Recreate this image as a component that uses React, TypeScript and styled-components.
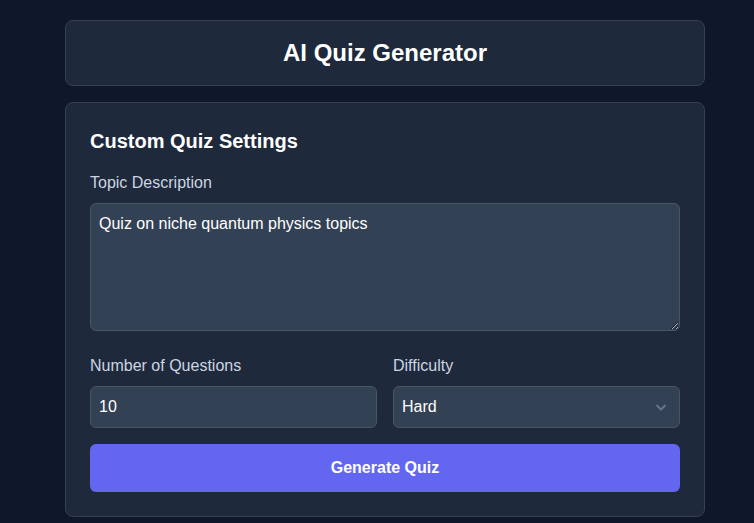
import React from 'react'
import styled, { createGlobalStyle } from 'styled-components'

const GlobalStyle = createGlobalStyle`
  * { box-sizing: border-box; }
  html, body {
    margin: 0;
    padding: 0;
    background: #0f172a;
    font-family: "Liberation Sans", Arial, sans-serif;
    color: #f8fafc;
  }
`

const Page = styled.div`
  padding: 20px 0 0 65px;
  min-height: 523px;
`

const Column = styled.div`
  width: 640px;
  display: flex;
  flex-direction: column;
  gap: 16px;
`

const Card = styled.section<{ padding: string }>`
  background: #1e293b;
  border: 1px solid #334155;
  border-radius: 8px;
  padding: ${({ padding }) => padding};
`

const Title = styled.h1`
  margin: 0;
  text-align: center;
  font-size: 24px;
  line-height: 32px;
  font-weight: 700;
  color: #ffffff;
`

const SectionTitle = styled.h2`
  margin: 0 0 16px;
  font-size: 20px;
  line-height: 28px;
  font-weight: 700;
  color: #ffffff;
`

const Field = styled.div<{ mb?: string }>`
  display: flex;
  flex-direction: column;
  margin-bottom: ${({ mb }) => mb || '0'};
`

const Label = styled.label`
  font-size: 16px;
  line-height: 24px;
  color: #cbd5e1;
  margin-bottom: 8px;
`

const TextArea = styled.textarea`
  display: block;
  width: 100%;
  height: 128px;
  resize: vertical;
  background: #334155;
  border: 1px solid #475569;
  border-radius: 6px;
  padding: 8px;
  color: #ffffff;
  font: 16px/24px "Liberation Sans", Arial, sans-serif;
  outline: none;
`

const Row = styled.div`
  display: grid;
  grid-template-columns: 1fr 1fr;
  gap: 16px;
  margin-bottom: 16px;
`

const Input = styled.input`
  width: 100%;
  height: 42px;
  background: #334155;
  border: 1px solid #475569;
  border-radius: 6px;
  padding: 8px;
  color: #ffffff;
  font: 16px/24px "Liberation Sans", Arial, sans-serif;
  outline: none;
`

const SelectWrap = styled.div`
  position: relative;
`

const Select = styled.select`
  width: 100%;
  height: 42px;
  appearance: none;
  background: #334155;
  border: 1px solid #475569;
  border-radius: 6px;
  padding: 8px;
  color: #ffffff;
  font: 16px/24px "Liberation Sans", Arial, sans-serif;
  outline: none;
`

const Chevron = styled.svg`
  position: absolute;
  right: 13px;
  top: 17px;
  pointer-events: none;
`

const Button = styled.button`
  width: 100%;
  height: 48px;
  border: none;
  border-radius: 6px;
  background: #6366f1;
  color: #ffffff;
  font: 700 16px/24px "Liberation Sans", Arial, sans-serif;
  cursor: pointer;
`

export default function App() {
  return (
    <>
      <GlobalStyle />
      <Page>
        <Column>
          <Card padding="16px">
            <Title>AI Quiz Generator</Title>
          </Card>
          <Card padding="24px">
            <SectionTitle>Custom Quiz Settings</SectionTitle>
            <Field mb="23px">
              <Label>Topic Description</Label>
              <TextArea defaultValue="Quiz on niche quantum physics topics" />
            </Field>
            <Row>
              <Field>
                <Label>Number of Questions</Label>
                <Input type="number" defaultValue={10} />
              </Field>
              <Field>
                <Label>Difficulty</Label>
                <SelectWrap>
                  <Select defaultValue="hard">
                    <option value="easy">Easy</option>
                    <option value="medium">Medium</option>
                    <option value="hard">Hard</option>
                  </Select>
                  <Chevron width="12" height="9" viewBox="0 0 12 9">
                    <path d="M1.5 2l4.5 4.5L10.5 2" fill="none" stroke="#64748b" strokeWidth="2" />
                  </Chevron>
                </SelectWrap>
              </Field>
            </Row>
            <Button>Generate Quiz</Button>
          </Card>
        </Column>
      </Page>
    </>
  )
}
